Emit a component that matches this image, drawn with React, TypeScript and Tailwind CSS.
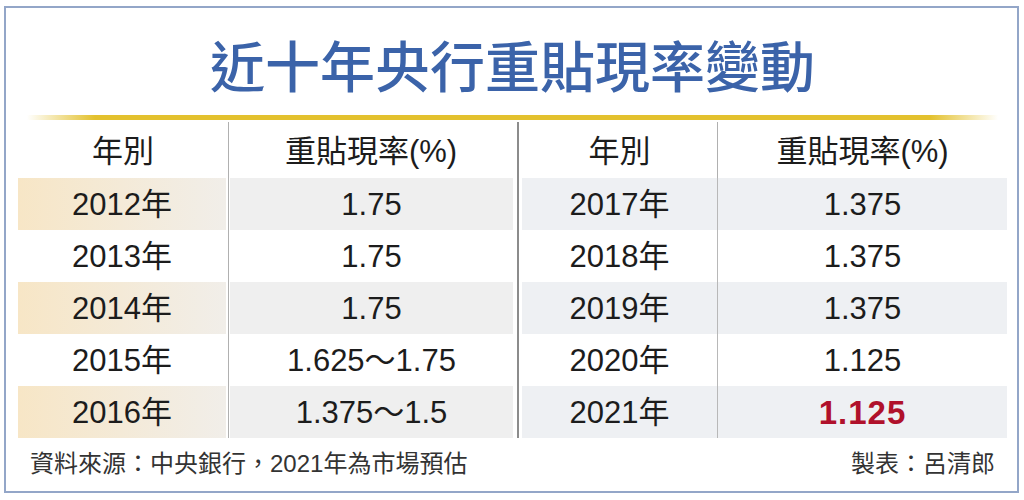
import React from "react";

type Row = { year: string; rate: string; shaded: boolean; red?: boolean };

const left: Row[] = [
  { year: "2012年", rate: "1.75", shaded: true },
  { year: "2013年", rate: "1.75", shaded: false },
  { year: "2014年", rate: "1.75", shaded: true },
  { year: "2015年", rate: "1.625～1.75", shaded: false },
  { year: "2016年", rate: "1.375～1.5", shaded: true },
];

const right: Row[] = [
  { year: "2017年", rate: "1.375", shaded: true },
  { year: "2018年", rate: "1.375", shaded: false },
  { year: "2019年", rate: "1.375", shaded: true },
  { year: "2020年", rate: "1.125", shaded: false },
  { year: "2021年", rate: "1.125", shaded: true, red: true },
];

function LeftHalf() {
  return (
    <div className="flex w-[495px] flex-col">
      <div className="flex h-[56px]">
        <div className="flex w-[211px] items-center justify-center border-r border-[#b0b0b0] pt-[2px]">年別</div>
        <div className="flex flex-1 items-center justify-center pt-[2px]">重貼現率(%)</div>
      </div>
      {left.map((r) => (
        <div key={r.year} className="flex h-[52px]">
          <div className="flex w-[211px] border-r border-[#b0b0b0] pr-[2px]">
            <div
              className={
                "flex flex-1 items-center justify-center " +
                (r.shaded ? "bg-gradient-to-r from-[#f7e6c6] to-[#f1eee9]" : "")
              }
            >
              {r.year}
            </div>
          </div>
          <div className="flex flex-1 pl-[1px]">
            <div className={"flex flex-1 items-center justify-center " + (r.shaded ? "bg-[#efefef]" : "")}>
              {r.rate}
            </div>
          </div>
        </div>
      ))}
    </div>
  );
}

function RightHalf() {
  return (
    <div className="flex w-[485px] flex-col">
      <div className="flex h-[56px]">
        <div className="flex w-[196px] items-center justify-center border-r border-[#b0b0b0] pt-[2px]">年別</div>
        <div className="flex flex-1 items-center justify-center pt-[2px]">重貼現率(%)</div>
      </div>
      {right.map((r) => (
        <div key={r.year} className={"flex h-[52px] " + (r.shaded ? "bg-[#eef0f3]" : "")}>
          <div className="flex w-[196px] items-center justify-center border-r border-[#b8b8b8]">{r.year}</div>
          <div
            className={
              "flex flex-1 items-center justify-center " +
              (r.red ? "text-[33px] font-bold tracking-[1px] text-[#b0112b]" : "")
            }
          >
            {r.rate}
          </div>
        </div>
      ))}
    </div>
  );
}

export default function App() {
  return (
    <div
      className="h-[500px] w-[1024px] overflow-hidden bg-white pl-[4px] pt-[6px]"
      style={{ fontFamily: '"Liberation Sans", "Noto Sans CJK TC", sans-serif' }}
    >
      <div className="flex h-[487px] w-[1015px] flex-col border-2 border-[#93a6c8] pl-[12px] pr-[10px]">
        <div className="flex h-[107px] justify-center pt-[28px]">
          <div
            className="text-[55px] font-medium leading-none text-[#3b63a9]"
            style={{ fontFamily: '"Noto Sans CJK TC", sans-serif' }}
          >
            近十年央行重貼現率變動
          </div>
        </div>
        <div className="mx-[9px] h-[5px] bg-[linear-gradient(to_right,rgba(230,196,40,0)_0%,#e3c12e_7%,#e3c12e_93%,rgba(230,196,40,0)_100%)]" />
        <div className="mt-[2px] flex text-[31px] leading-none text-[#1c1c1c]">
          <LeftHalf />
          <div className="flex w-[9px] justify-center">
            <div className="w-[2px] bg-[#8c8c8c]" />
          </div>
          <RightHalf />
        </div>
        <div className="flex h-[51px] items-center justify-between px-[12px] text-[24px] leading-none text-[#333333]">
          <span>資料來源：中央銀行，2021年為市場預估</span>
          <span>製表：呂清郎</span>
        </div>
      </div>
    </div>
  );
}
